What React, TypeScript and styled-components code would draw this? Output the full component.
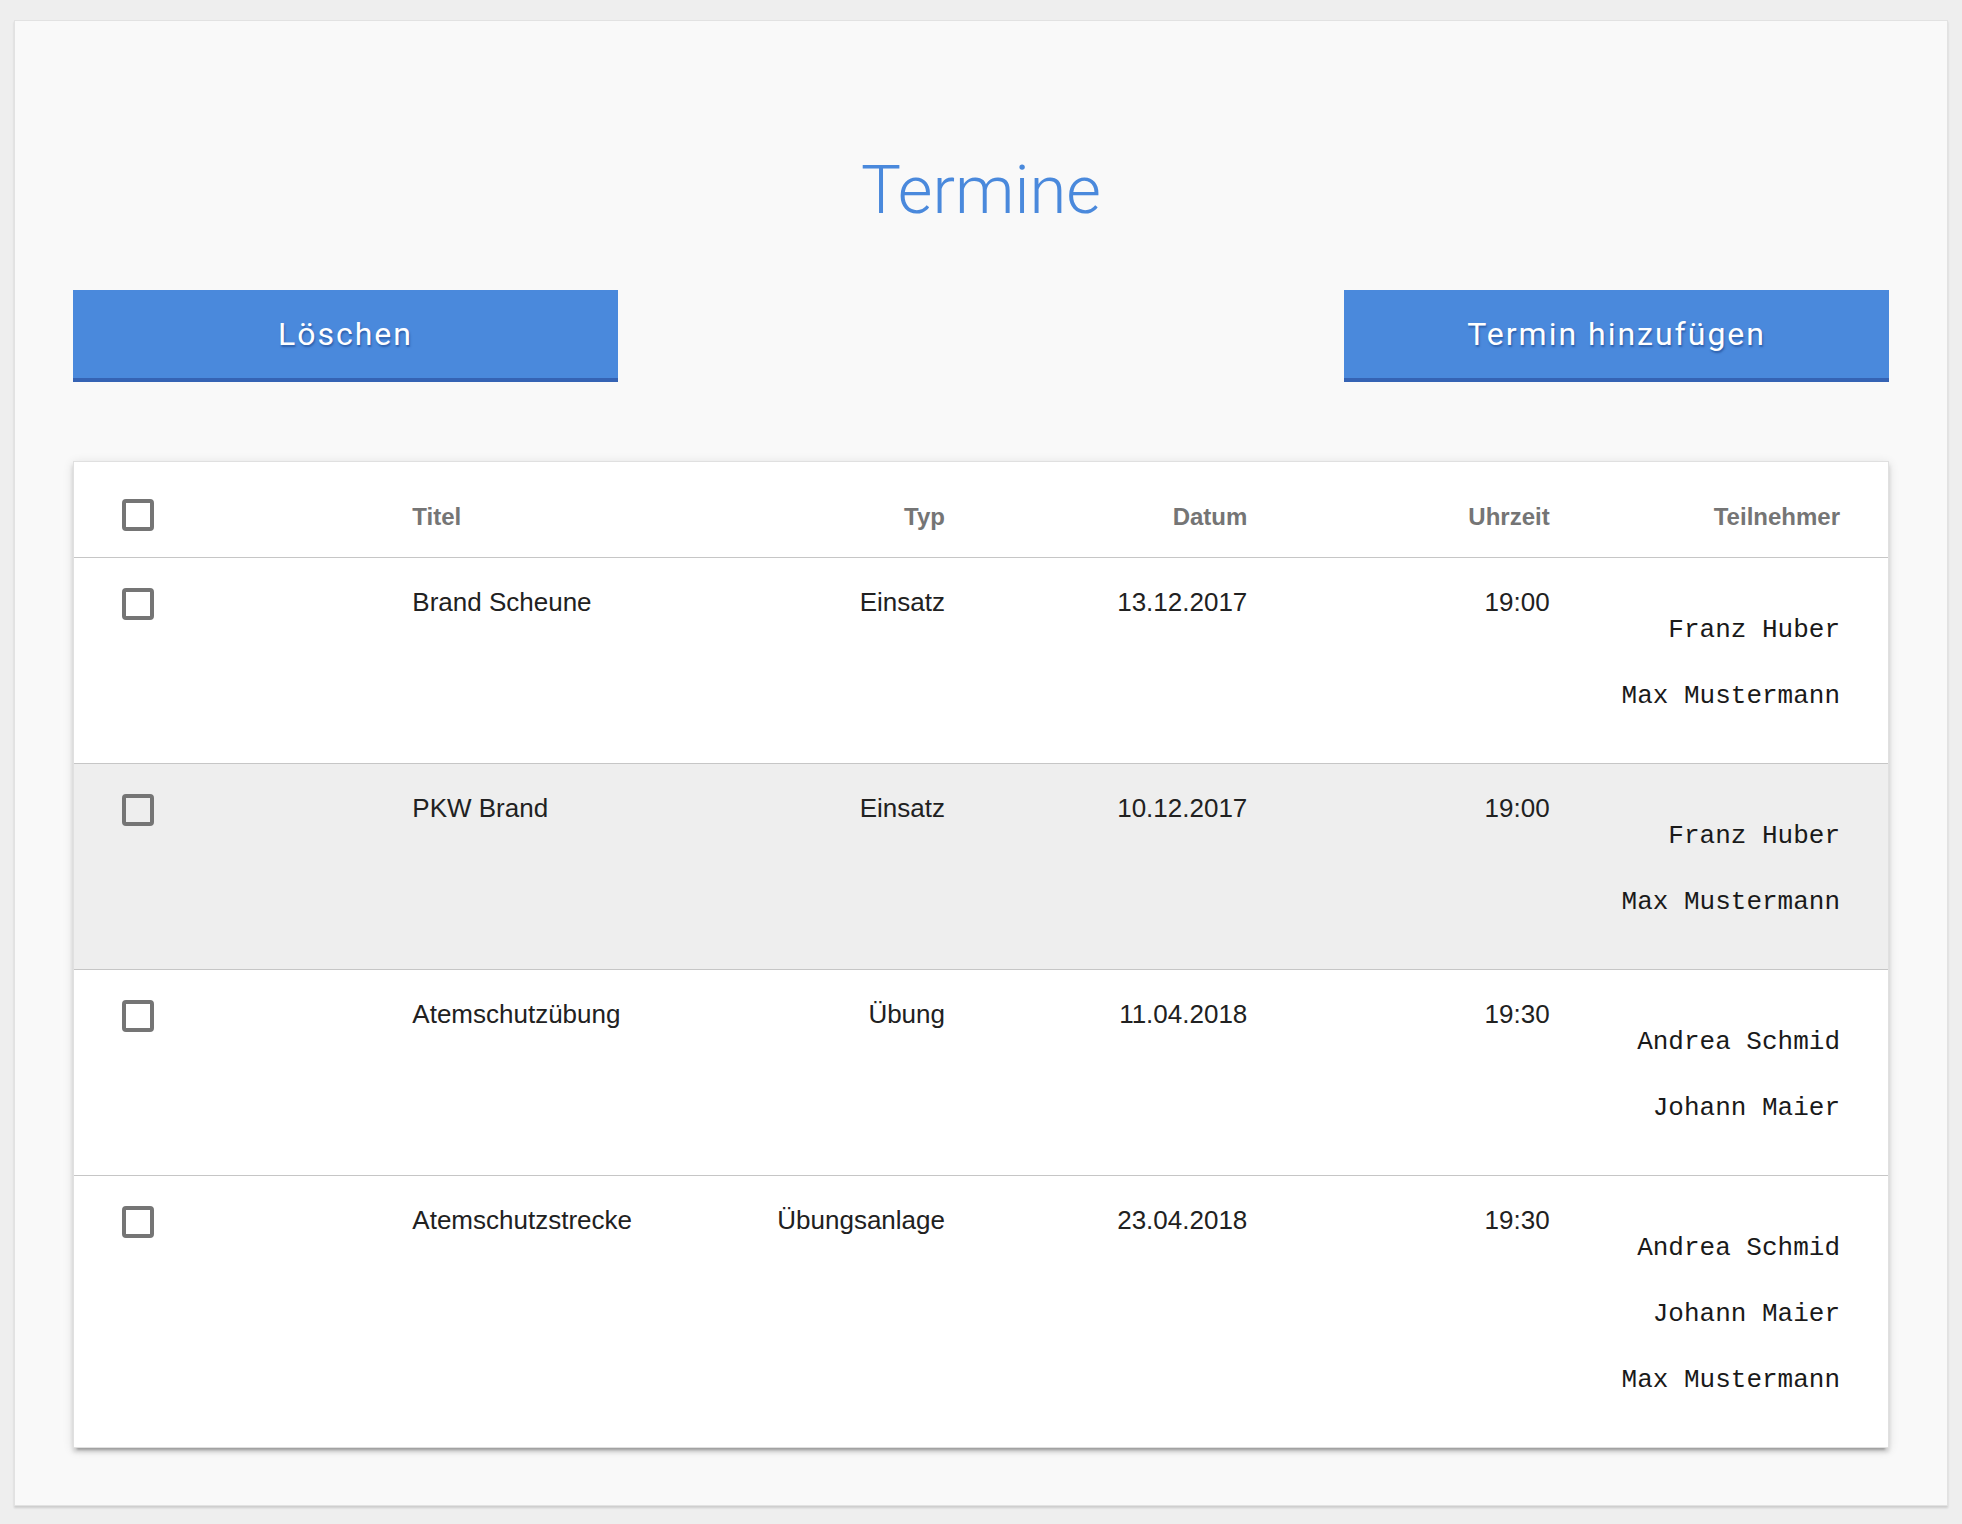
import React from "react";
import styled, { createGlobalStyle } from "styled-components";

const GlobalStyle = createGlobalStyle`
  html, body {
    margin: 0;
    padding: 0;
    background: #eeeeee;
  }
  body {
    font-family: "Liberation Sans", Arial, sans-serif;
    color: #212121;
  }
  * { box-sizing: border-box; }
`;

const Page = styled.div`
  padding: 20px 14px 19px 14px;
`;

const Card = styled.main`
  background: #f9f9f9;
  border: 1px solid #e2e2e2;
  box-shadow: 0 2px 2px rgba(0, 0, 0, 0.14);
  padding: 129px 58px 57px;
`;

const Title = styled.h1`
  margin: 0 0 60px;
  font-family: Roboto, "Liberation Sans", sans-serif;
  font-weight: 300;
  font-size: 67px;
  line-height: 80px;
  color: #4a89dc;
  text-align: center;
`;

const Toolbar = styled.div`
  display: flex;
  justify-content: space-between;
  margin-bottom: 79px;
`;

const ActionButton = styled.button`
  width: 30%;
  height: 92px;
  border: none;
  border-bottom: 4px solid #3563b4;
  background: #4a89dc;
  color: #ffffff;
  font-family: Roboto, "Liberation Sans", sans-serif;
  font-weight: 400;
  font-size: 32px;
  letter-spacing: 2px;
  text-shadow: 1px 2px 2px rgba(20, 60, 130, 0.55);
  cursor: pointer;
  padding: 0;
`;

const Table = styled.div`
  background: #ffffff;
  border: 1px solid rgba(0, 0, 0, 0.12);
  box-shadow: 0 4px 4px 0 rgba(0, 0, 0, 0.14), 0 6px 2px -4px rgba(0, 0, 0, 0.2),
    0 2px 10px 0 rgba(0, 0, 0, 0.12);
`;

const HeadRow = styled.div`
  display: grid;
  grid-template-columns: repeat(6, minmax(0, 1fr));
  height: 95px;
`;

const Row = styled.div<{ $hover?: boolean }>`
  display: grid;
  grid-template-columns: repeat(6, minmax(0, 1fr));
  border-top: 1px solid #c6c6c6;
  background: ${(p) => (p.$hover ? "#eeeeee" : "#ffffff")};
`;

const HeadCell = styled.div<{ $right?: boolean; $first?: boolean; $last?: boolean }>`
  display: flex;
  align-items: flex-end;
  justify-content: ${(p) => (p.$right ? "flex-end" : "flex-start")};
  padding: 0 ${(p) => (p.$last ? 48 : 36)}px 16px ${(p) => (p.$first ? 48 : 36)}px;
  font-weight: 700;
  font-size: 24px;
  line-height: 48px;
  color: #757575;
  white-space: nowrap;
`;

const Cell = styled.div<{ $right?: boolean; $first?: boolean; $last?: boolean }>`
  display: flex;
  flex-direction: column;
  align-items: ${(p) => (p.$right ? "flex-end" : "flex-start")};
  padding: 24px ${(p) => (p.$last ? 48 : 36)}px 23px ${(p) => (p.$first ? 48 : 36)}px;
  font-size: 26px;
  line-height: 40px;
  color: #212121;
  white-space: nowrap;
`;

const CheckWrap = styled.label`
  display: block;
  height: 48px;
  padding-top: 6px;
  cursor: pointer;
`;

const CheckBox = styled.span`
  display: block;
  width: 32px;
  height: 32px;
  border: 4px solid #757575;
  border-radius: 4px;
  background: transparent;
`;

const NameList = styled.div`
  display: flex;
  flex-direction: column;
  align-items: flex-end;
  gap: 26px;
  padding: 28px 0 24px;
`;

const Name = styled.span`
  font-family: "Liberation Mono", "Courier New", monospace;
  font-size: 26px;
  line-height: 40px;
  color: #1a1a1a;
`;

type Termin = {
  titel: string;
  typ: string;
  datum: string;
  uhrzeit: string;
  teilnehmer: string[];
  hover?: boolean;
};

const termine: Termin[] = [
  { titel: "Brand Scheune", typ: "Einsatz", datum: "13.12.2017", uhrzeit: "19:00", teilnehmer: ["Franz Huber", "Max Mustermann"] },
  { titel: "PKW Brand", typ: "Einsatz", datum: "10.12.2017", uhrzeit: "19:00", teilnehmer: ["Franz Huber", "Max Mustermann"], hover: true },
  { titel: "Atemschutzübung", typ: "Übung", datum: "11.04.2018", uhrzeit: "19:30", teilnehmer: ["Andrea Schmid", "Johann Maier"] },
  { titel: "Atemschutzstrecke", typ: "Übungsanlage", datum: "23.04.2018", uhrzeit: "19:30", teilnehmer: ["Andrea Schmid", "Johann Maier", "Max Mustermann"] },
];

const Checkbox = () => (
  <CheckWrap>
    <CheckBox />
  </CheckWrap>
);

export default function App() {
  return (
    <>
      <GlobalStyle />
      <Page>
        <Card>
          <Title>Termine</Title>
          <Toolbar>
            <ActionButton>Löschen</ActionButton>
            <ActionButton>Termin hinzufügen</ActionButton>
          </Toolbar>
          <Table>
            <HeadRow>
              <HeadCell $first>
                <Checkbox />
              </HeadCell>
              <HeadCell>Titel</HeadCell>
              <HeadCell $right>Typ</HeadCell>
              <HeadCell $right>Datum</HeadCell>
              <HeadCell $right>Uhrzeit</HeadCell>
              <HeadCell $right $last>Teilnehmer</HeadCell>
            </HeadRow>
            {termine.map((t) => (
              <Row key={t.titel} $hover={t.hover}>
                <Cell $first>
                  <Checkbox />
                </Cell>
                <Cell>{t.titel}</Cell>
                <Cell $right>{t.typ}</Cell>
                <Cell $right>{t.datum}</Cell>
                <Cell $right>{t.uhrzeit}</Cell>
                <Cell $right $last>
                  <NameList>
                    {t.teilnehmer.map((n) => (
                      <Name key={n}>{n}</Name>
                    ))}
                  </NameList>
                </Cell>
              </Row>
            ))}
          </Table>
        </Card>
      </Page>
    </>
  );
}
